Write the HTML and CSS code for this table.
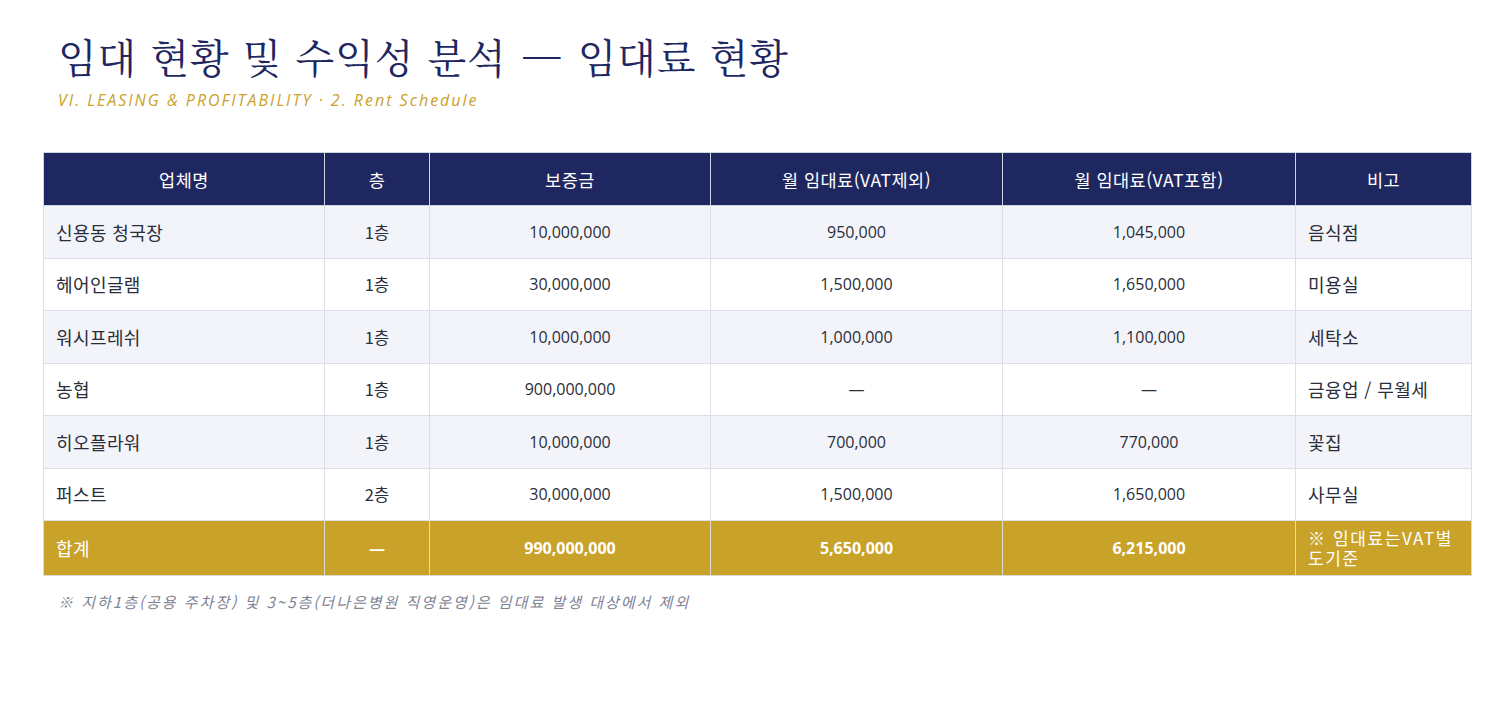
FILE: index.html
```html
<!DOCTYPE html>
<html lang="ko">
<head>
<meta charset="utf-8">
<title>임대료 현황</title>
<link rel="stylesheet" href="styles.css">
</head>
<body>
<main class="page">
  <header class="head">
    <h1 class="title">임대 현황 및 수익성 분석 — 임대료 현황</h1>
    <p class="subtitle">VI. LEASING &amp; PROFITABILITY · 2. Rent Schedule</p>
  </header>
  <table class="rent">
    <colgroup>
      <col class="c1"><col class="c2"><col class="c3"><col class="c4"><col class="c5"><col class="c6">
    </colgroup>
    <thead>
      <tr>
        <th>업체명</th><th>층</th><th>보증금</th><th>월 임대료(VAT제외)</th><th>월 임대료(VAT포함)</th><th>비고</th>
      </tr>
    </thead>
    <tbody>
      <tr class="alt"><td class="name">신용동 청국장</td><td class="floor">1층</td><td class="num">10,000,000</td><td class="num">950,000</td><td class="num">1,045,000</td><td class="note">음식점</td></tr>
      <tr><td class="name">헤어인글램</td><td class="floor">1층</td><td class="num">30,000,000</td><td class="num">1,500,000</td><td class="num">1,650,000</td><td class="note">미용실</td></tr>
      <tr class="alt"><td class="name">워시프레쉬</td><td class="floor">1층</td><td class="num">10,000,000</td><td class="num">1,000,000</td><td class="num">1,100,000</td><td class="note">세탁소</td></tr>
      <tr><td class="name">농협</td><td class="floor">1층</td><td class="num">900,000,000</td><td class="num">—</td><td class="num">—</td><td class="note">금융업 / 무월세</td></tr>
      <tr class="alt"><td class="name">히오플라워</td><td class="floor">1층</td><td class="num">10,000,000</td><td class="num">700,000</td><td class="num">770,000</td><td class="note">꽃집</td></tr>
      <tr><td class="name">퍼스트</td><td class="floor">2층</td><td class="num">30,000,000</td><td class="num">1,500,000</td><td class="num">1,650,000</td><td class="note">사무실</td></tr>
      <tr class="total"><td class="name">합계</td><td class="num">—</td><td class="num">990,000,000</td><td class="num">5,650,000</td><td class="num">6,215,000</td><td class="note">※ 임대료는VAT별도기준</td></tr>
    </tbody>
  </table>
  <p class="footnote">※ 지하1층(공용 주차장) 및 3~5층(더나은병원 직영운영)은 임대료 발생 대상에서 제외</p>
</main>
</body>
</html>
```
FILE: styles.css
```css
html, body {
  margin: 0;
  padding: 0;
  background: #ffffff;
}
body {
  font-family: "Noto Sans CJK KR", "Noto Sans", sans-serif;
  color: #2a2e3a;
}
.page {
  padding: 28px 41px 0 43px;
}
.head {
  padding-left: 15px;
}
.title {
  margin: 0;
  font-family: "Noto Serif CJK KR", "Noto Sans CJK KR", serif;
  font-weight: 400;
  font-size: 40px;
  line-height: 56px;
  letter-spacing: 0.9px;
  color: #1f2761;
}
.subtitle {
  margin: 6px 0 0 0;
  font-family: "Open Sans", "Noto Sans CJK KR", sans-serif;
  font-style: italic;
  font-size: 16px;
  line-height: 20px;
  letter-spacing: 2px;
  color: #c9a22a;
}
.rent {
  margin-top: 42px;
  width: 1428px;
  border-collapse: collapse;
  table-layout: fixed;
}
.c1 { width: 281px; }
.c2 { width: 105px; }
.c3 { width: 281px; }
.c4 { width: 292px; }
.c5 { width: 293px; }
.c6 { width: 176px; }
.rent th, .rent td {
  border: 1px solid #dcdfe9;
  padding: 0 12px;
}
.rent th {
  height: 52px;
  background: #1f2761;
  color: #ffffff;
  font-weight: 400;
  font-size: 17.5px;
  letter-spacing: 0.5px;
  text-align: center;
  border-color: #cfd3e0;
}
.rent td {
  height: 51.5px;
  font-size: 18px;
  letter-spacing: 0.4px;
  background: #ffffff;
}
.rent tr.alt td {
  background: #f3f4f9;
}
.rent td.name, .rent td.note {
  text-align: left;
}
.rent td.num {
  text-align: center;
  font-family: "Open Sans", "Noto Sans CJK KR", sans-serif;
  font-size: 16px;
  letter-spacing: 0;
}
.rent td.floor {
  text-align: center;
  font-size: 16.5px;
  letter-spacing: 0;
}
.rent tr.total td {
  background: #c9a22a;
  color: #ffffff;
  height: 54px;
  border-color: #dcdbd0;
}
.rent tr.total td.num {
  font-weight: 700;
}
.rent tr.total td.note {
  font-size: 17px;
  line-height: 20px;
  letter-spacing: 1.6px;
}
.footnote {
  margin: 15px 0 0 15px;
  font-size: 15px;
  letter-spacing: 2px;
  font-style: italic;
  color: #7d8294;
}
```
